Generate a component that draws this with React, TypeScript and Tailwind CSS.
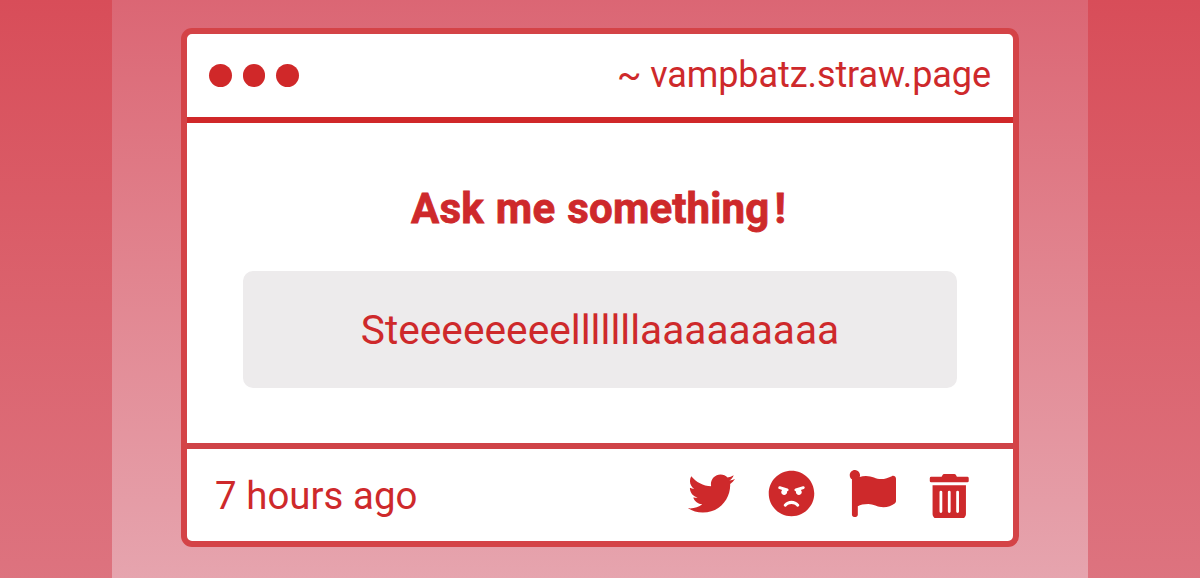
import React from "react";
import { FaTwitter, FaAngry, FaFlag, FaTrashAlt } from "react-icons/fa";

export default function App() {
  return (
    <main className="flex h-[578px] w-[1200px] justify-center overflow-hidden bg-linear-to-b from-[#d84d59] to-[#dd737f] font-['Roboto',sans-serif] text-[#ce292b]">
      <div className="w-[976px] bg-linear-to-b from-[#db6674] to-[#e6a4ae] px-[69px] pt-7">
        <section className="flex h-[519px] flex-col overflow-hidden rounded-[11px] border-[6px] border-[#d44347] bg-white">
          <header className="flex h-[89px] items-center justify-between border-b-[6px] border-[#d02829] px-[22px]">
            <div className="flex gap-[11px]">
              <span className="size-[22.5px] rounded-full bg-[#d02829]" />
              <span className="size-[22.5px] rounded-full bg-[#d02829]" />
              <span className="size-[22.5px] rounded-full bg-[#d02829]" />
            </div>
            <span className="-mt-px text-[36px] tracking-[-0.08px]">~ vampbatz.straw.page</span>
          </header>
          <div className="flex flex-1 flex-col px-14 pt-[58px]">
            <h1 className="pr-[3px] text-center text-[42px] leading-[56px] font-bold tracking-[0.15px] [-webkit-text-stroke:0.8px_#ce292b] [word-spacing:1.5px]">Ask me something<span className="ml-[5px]">!</span></h1>
            <p className="mt-[34px] flex h-[117px] items-center justify-center rounded-[10px] bg-[#edebec] pt-[3px] text-[40.7px]">Steeeeeeeelllllllaaaaaaaaa</p>
          </div>
          <footer className="flex h-[98px] items-center justify-between border-t-[6px] border-[#cf4347] pr-[42px] pl-7">
            <span className="pt-0.5 text-[38.4px] tracking-[0.05px]">7 hours ago</span>
            <div className="flex items-center gap-[33.5px] pb-1">
              <FaTwitter size={47} />
              <FaAngry size={47} />
              <FaFlag size={47} className="ml-[0.5px]" />
              <FaTrashAlt size={44.5} className="mt-1.5 -ml-[3px]" />
            </div>
          </footer>
        </section>
      </div>
    </main>
  );
}
